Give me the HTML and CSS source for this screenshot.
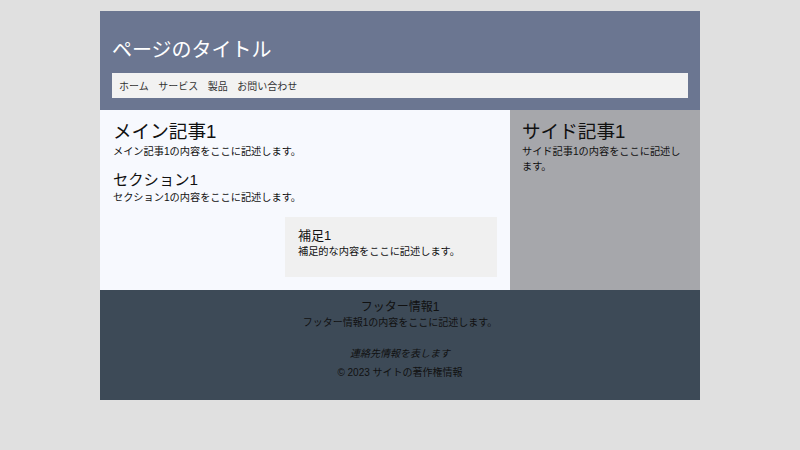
FILE: index.html
```html
<!DOCTYPE html>
<html lang="ja">
<head>
  <meta charset="UTF-8" />
  <meta name="viewport" content="width=device-width, initial-scale=1.0"/>
  <title>ページのタイトル</title>
  <link rel="stylesheet" href="styles.css">
</head>
<body>
  <div class="page">
    <header class="site-header">
      <h1>ページのタイトル</h1>
      <nav class="nav">
        <a href="#">ホーム</a>
        <a href="#">サービス</a>
        <a href="#">製品</a>
        <a href="#">お問い合わせ</a>
      </nav>
    </header>

    <div class="content">
      <main class="main">
        <article>
          <h2>メイン記事1</h2>
          <p>メイン記事1の内容をここに記述します。</p>
          <section class="section">
            <h3>セクション1</h3>
            <p>セクション1の内容をここに記述します。</p>
          </section>
          <aside class="note">
            <h4>補足1</h4>
            <p>補足的な内容をここに記述します。</p>
          </aside>
        </article>
      </main>

      <aside class="side">
        <h2>サイド記事1</h2>
        <p>サイド記事1の内容をここに記述します。</p>
      </aside>
    </div>

    <footer class="site-footer">
      <div class="footer-title">フッター情報1</div>
      <p>フッター情報1の内容をここに記述します。</p>
      <address>連絡先情報を表します</address>
      <p class="copy">&copy; 2023 サイトの著作権情報</p>
    </footer>
  </div>
</body>
</html>
```

FILE: styles.css
```css
body {
  margin: 0;
  background-color: #e0e0e0;
  font-family: 'Liberation Sans', 'Noto Sans CJK JP', sans-serif;
  color: #111;
}

.page {
  width: 600px;
  margin: 11px auto 0;
}

.site-header {
  background-color: #6b7691;
  padding: 12px;
}

.site-header h1 {
  margin: 13px 0 9px;
  font-size: 20px;
  line-height: 28px;
  font-weight: normal;
  color: #fff;
}

.nav {
  display: flex;
  gap: 9.5px;
  align-items: center;
  height: 25px;
  padding: 0 7px;
  background-color: #f2f2f2;
  box-sizing: border-box;
}

.nav a {
  font-size: 10px;
  color: #333;
  text-decoration: none;
}

.content {
  display: flex;
}

.main {
  flex: 1;
  background-color: #f7f9fe;
  padding: 10px 13px 13px;
}

h2 {
  margin: 0;
  font-size: 18.6px;
  line-height: 24px;
  font-weight: normal;
}

p {
  margin: 0;
  font-size: 10.2px;
  line-height: 15px;
}

.section {
  margin-top: 11px;
}

.section h3 {
  margin: 0;
  font-size: 15.3px;
  line-height: 20px;
  font-weight: normal;
}

.note {
  width: 212px;
  margin: 12px 0 0 auto;
  padding: 11px 13px 18px;
  background-color: #f0f0f0;
  box-sizing: border-box;
}

.note h4 {
  margin: 0;
  font-size: 13px;
  line-height: 16px;
  font-weight: normal;
}

.side {
  width: 190px;
  background-color: #a6a7ab;
  padding: 10px 12px;
  box-sizing: border-box;
}

.site-footer {
  background-color: #3d4a57;
  padding: 10px 0 20px;
  text-align: center;
}

.footer-title {
  font-size: 12px;
  line-height: 15px;
}

.site-footer p {
  font-size: 10px;
}

address {
  margin-top: 16px;
  font-size: 10px;
  line-height: 15px;
}

.copy {
  margin-top: 4px;
}
```
